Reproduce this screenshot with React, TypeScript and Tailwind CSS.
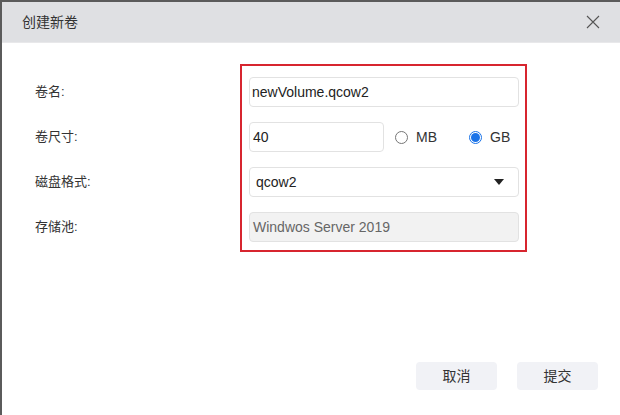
import React from "react";

const font = { fontFamily: '"Liberation Sans", "Noto Sans CJK SC", sans-serif' };

const Radio = ({ checked, label }: { checked?: boolean; label: string }) => (
  <label className="flex items-center gap-[8px] text-[14px] text-[#333]">
    {checked ? (
      <span className="w-[13px] h-[13px] rounded-full border border-[#1a73e8] flex items-center justify-center">
        <span className="w-[9px] h-[9px] rounded-full bg-[#1a73e8]" />
      </span>
    ) : (
      <span className="w-[13px] h-[13px] rounded-full border border-[#767676] bg-white" />
    )}
    {label}
  </label>
);

export default function App() {
  const labels = ["卷名:", "卷尺寸:", "磁盘格式:", "存储池:"];

  return (
    <div
      style={font}
      className="w-[620px] h-[415px] bg-white border-l-2 border-t-2 border-[#5b5b5b] flex flex-col"
    >
      {/* HEADER */}
      <div className="h-[41px] bg-[#dfe0e3] border-b border-[#e8e8ea] flex items-center justify-between pl-[20px] pr-[20px]">
        <span className="text-[14px] text-[#333]">创建新卷</span>
        <svg width="14" height="14" viewBox="0 0 14 14" className="text-[#555]">
          <path d="M1 1L13 13M13 1L1 13" stroke="currentColor" strokeWidth="1.1" />
        </svg>
      </div>

      {/* FORM */}
      <div className="flex pl-[33px] mt-[21px]">
        <div className="w-[205px] pt-[13px] flex flex-col gap-[15px]">
          {labels.map((l) => (
            <div key={l} className="h-[30px] flex items-center text-[13px] text-[#333]">
              {l}
            </div>
          ))}
        </div>

        <div className="w-[287px] border-2 border-[#d7252f] pt-[11px] pb-[8px] pl-[7px] pr-[6px] flex flex-col gap-[15px]">
          <div className="h-[30px] border border-[#e2e2e2] rounded-[4px] px-[2px] flex items-center text-[14px] text-[#222]">
            newVolume.qcow2
          </div>

          <div className="h-[30px] flex items-center">
            <div className="w-[135px] shrink-0 h-[30px] border border-[#e2e2e2] rounded-[4px] px-[3px] flex items-center text-[14px] text-[#222]">
              40
            </div>
            <div className="ml-[11px] flex items-center gap-[32px]">
              <Radio label="MB" />
              <Radio label="GB" checked />
            </div>
          </div>

          <div className="h-[30px] border border-[#e2e2e2] rounded-[4px] pl-[6px] pr-[14px] flex items-center justify-between text-[14px] text-[#222]">
            <span>qcow2</span>
            <svg width="10" height="6" viewBox="0 0 10 6">
              <path d="M0 0H10L5 6Z" fill="#222" />
            </svg>
          </div>

          <div className="h-[30px] border border-[#e2e2e2] bg-[#f2f2f2] rounded-[4px] px-[3px] flex items-center text-[14px] text-[#666]">
            Windwos Server 2019
          </div>
        </div>
      </div>

      {/* FOOTER */}
      <div className="mt-auto flex justify-end gap-[20px] pr-[22px] pb-[25px]">
        <button className="w-[81px] h-[28px] rounded-[4px] bg-[#f1f2f6] text-[14px] text-[#333]">
          取消
        </button>
        <button className="w-[81px] h-[28px] rounded-[4px] bg-[#f1f2f6] text-[14px] text-[#333]">
          提交
        </button>
      </div>
    </div>
  );
}
